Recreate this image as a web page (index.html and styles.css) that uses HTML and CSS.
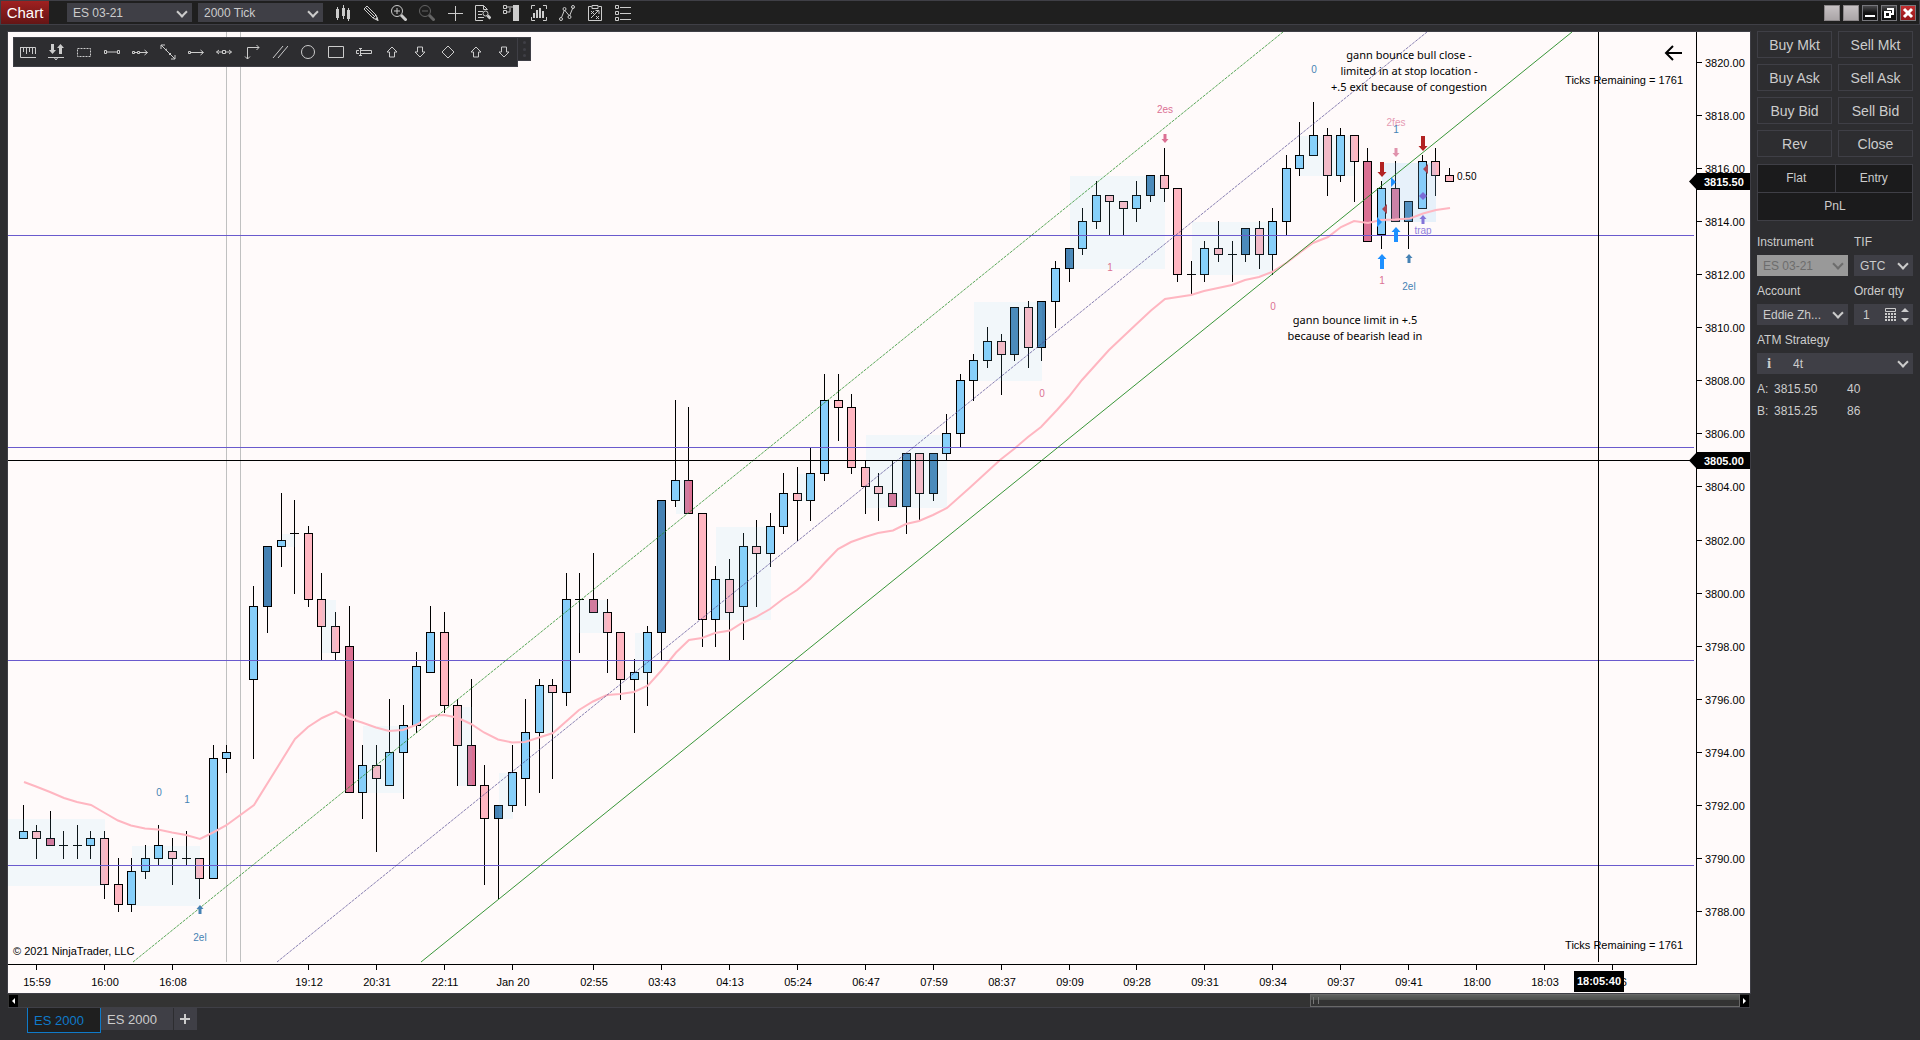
FILE: index.html
```html
<!DOCTYPE html>
<html lang="en">
<head>
    <meta charset="UTF-8">
    <meta name="viewport" content="width=device-width, initial-scale=1">
    <title>Chart - ES 03-21</title>
    <link rel="stylesheet" href="styles.css">
</head>
<body>
    <header class="titlebar">
        <h1 class="badge">Chart</h1>
        <div class="dropdown top-dropdown">
            <select aria-label="Instrument selector"><option>ES 03-21</option></select>
        </div>
        <div class="dropdown top-dropdown">
            <select aria-label="Interval selector"><option>2000 Tick</option></select>
        </div>
        <nav class="tools">
            <button aria-label="Bars"><svg viewBox="0 0 16 16"><path d="M2.5 2v13M8.500 0v14M13.500 3v13"/><path class="fill" d="M1 4h3v9H1zM7 3h3v8H7zM12 5h3v9h-3z"/></svg></button>
            <button aria-label="Drawing tools"><svg viewBox="0 0 16 16"><path d="M1 4l3-3 9 9-3 3zM2.500 2.500l9 9M10 13l5 2.500-2-5.500"/><path class="fill" d="M12 14l3.500 2-1-4z"/></svg></button>
            <button aria-label="Zoom in"><svg viewBox="0 0 16 16"><circle cx="6" cy="6" r="5.500"/><path d="M6 3v6M3 6h6"/><path class="thick" d="M10 10l5.500 5.500"/></svg></button>
            <button aria-label="Zoom out" disabled><svg viewBox="0 0 16 16"><circle cx="6" cy="6" r="5.500"/><path d="M3 6h6"/><path class="thick" d="M10 10l5.500 5.500"/></svg></button>
            <button aria-label="Crosshair"><svg viewBox="0 0 16 16"><path d="M8.500 1v15M1 8.500h15"/></svg></button>
            <button aria-label="Data box"><svg viewBox="0 0 16 16"><path d="M8 15.500H.5V.5h8l4 4M8.500.5v4h4M3 6.500h5M3 9.500h4M3 12.500h6"/><circle cx="10.500" cy="8.500" r="2.500"/><path class="thick" d="M12.500 10.500l3 3"/></svg></button>
            <button aria-label="Chart trader"><svg viewBox="0 0 16 16"><path d="M.5.500h3v3h-3zM.5 5.500h3v3h-3zM4 2h7M4 7h3V3"/><path class="fill" d="M10 0h6v16h-6z"/></svg></button>
            <button aria-label="Data series"><svg viewBox="0 0 16 16"><path d="M.5 4V.5H4M12 .5h3.500V4M.5 12v3.500H4M12 15.500h3.500V12"/><path class="bars" d="M3 8v5M6 5v8M9 3v10M12 6v7"/></svg></button>
            <button aria-label="Indicators"><svg viewBox="0 0 16 16"><path d="M2.500 12.500L5.500 5l5 6L14 2.500"/><circle cx="2" cy="14" r="1.500"/><circle cx="5.500" cy="4" r="1.500"/><circle cx="10.500" cy="12" r="1.500"/><circle cx="14" cy="2" r="1.500"/></svg></button>
            <button aria-label="Strategies"><svg viewBox="0 0 16 16"><path d="M1.500 1.500h3m7 0h3v14h-13v-14M5 .5h6v3H5zM4 6l3 3M7 6L4 9M9 11l3 3M12 11l-3 3M4 13l7-7M8.500 5.500H12V9"/></svg></button>
            <button aria-label="Properties"><svg viewBox="0 0 16 16"><path d="M.5.500h3v3h-3zM.5 6.500h3v3h-3zM.5 12.500h3v3h-3zM5 2.500h11M5 8.500h11M5 14.500h11"/></svg></button>
        </nav>
        <div class="window-buttons">
            <button class="pale" aria-label="Link instrument"></button>
            <button class="pale" aria-label="Link interval"></button>
            <button aria-label="Minimize"><svg viewBox="0 0 14 14"><path d="M2 10h10"/></svg></button>
            <button aria-label="Restore"><svg viewBox="0 0 14 14"><path d="M5 3h6v5H8M3 6h5v5H3z"/></svg></button>
            <button class="close" aria-label="Close window"><svg viewBox="0 0 14 14"><path d="M3 3l8 8M11 3l-8 8"/></svg></button>
        </div>
    </header>

    <main class="workspace">
        <section class="chart-area">
            <div class="chart">
                <svg id="plot" viewBox="8 32 1742 961" preserveAspectRatio="xMinYMin meet" role="img" aria-label="ES 03-21, 2000 Tick"></svg>
                <div class="draw-bar">
                    <div class="draw-tools">
                        <button aria-label="Ruler"><svg viewBox="0 0 16 16"><path d="M.5 3v10.500H16M.5 3.500h15V10M3.500 4v4M6.500 4v6M9.500 4v4M12.500 4v6"/></svg></button>
                        <button aria-label="Risk reward"><svg viewBox="0 0 16 16"><path class="fill" d="M3 0h3v6h2L4.500 10 1 6h2zM11 10h3V4h2L12.500 0 9 4h2z"/><path d="M0 13.500h16M6.500 14l1.500 2 1.500-2"/></svg></button>
                        <button aria-label="Region"><svg viewBox="0 0 16 16"><path stroke-dasharray="2 1" d="M1.500 4.500h13v8h-13z"/></svg></button>
                        <button aria-label="Line"><svg viewBox="0 0 16 16"><path d="M3 8h10M.5 6.500h2v3h-2zM13.500 6.500h2v3h-2z"/></svg></button>
                        <button aria-label="Ray"><svg viewBox="0 0 16 16"><path d="M.5 7.500h2v2h-2zM5.500 7.500h2v2h-2zM3 8.500h2M8 8.500h7.500M12.500 6l3 2.500-3 2.500"/></svg></button>
                        <button aria-label="Extended line"><svg viewBox="0 0 16 16"><path d="M1 1l14 14M1 5V1h4M15 11v4h-4M5 6l2-1M9 11l2-2"/></svg></button>
                        <button aria-label="Arrow line"><svg viewBox="0 0 16 16"><path d="M.5 7.500h2v2h-2zM3 8.500h12M12.500 6l3 2.500-3 2.500"/></svg></button>
                        <button aria-label="Horizontal line"><svg viewBox="0 0 16 16"><path d="M.5 8H6M10 8h5.500M3 6L.5 8 3 10M13 6l2.500 2L13 10M6.500 6.500h3v3h-3z"/></svg></button>
                        <button aria-label="Path"><svg viewBox="0 0 16 16"><path d="M3.500 15V3.500H15M12.500 1L15 3.500 12.500 6M1 12.500L3.500 15 6 12.500"/></svg></button>
                        <button aria-label="Channel"><svg viewBox="0 0 16 16"><path d="M1 14L11 2M6 14L16 2"/></svg></button>
                        <button aria-label="Ellipse"><svg viewBox="0 0 16 16"><circle cx="8" cy="8" r="6.500"/></svg></button>
                        <button aria-label="Rectangle"><svg viewBox="0 0 16 16"><path d="M.5 2.500h15v11H.5z"/></svg></button>
                        <button aria-label="Text"><svg viewBox="0 0 16 16"><path d="M5 6.500h10.500v3H5M3 6.500H.5v3H3M4.500 4.500v7M3 4.500h3M3 11.500h3"/></svg></button>
                        <button aria-label="Arrow up"><svg viewBox="0 0 16 16"><path d="M8 3l5 5h-2.500v5h-5V8H3z"/></svg></button>
                        <button aria-label="Arrow down"><svg viewBox="0 0 16 16"><path d="M8 13l5-5h-2.500V3h-5v5H3z"/></svg></button>
                        <button aria-label="Diamond"><svg viewBox="0 0 16 16"><path d="M8 2l6 6-6 6-6-6z"/></svg></button>
                        <button aria-label="Signal up"><svg viewBox="0 0 16 16"><path d="M8 3l5 5h-2.500v5h-5V8H3z"/></svg></button>
                        <button aria-label="Signal down"><svg viewBox="0 0 16 16"><path d="M8 13l5-5h-2.500V3h-5v5H3z"/></svg></button>
                    </div>
                    <div class="grip"><i></i><i></i><i></i></div>
                </div>
            </div>
            <div class="scrollbar">
                <button class="arrow-left" aria-label="Scroll left"></button>
                <div class="track"><div class="thumb"></div></div>
                <button class="arrow-right" aria-label="Scroll right"></button>
            </div>
            <div class="tabs">
                <button class="tab active">ES 2000</button>
                <button class="tab">ES 2000</button>
                <button class="tab add" aria-label="Add tab"><svg viewBox="0 0 10 10"><path d="M5 0v10M0 5h10"/></svg></button>
            </div>
        </section>

        <aside class="trader">
            <div class="orders">
                <button>Buy Mkt</button><button>Sell Mkt</button>
                <button>Buy Ask</button><button>Sell Ask</button>
                <button>Buy Bid</button><button>Sell Bid</button>
                <button>Rev</button><button>Close</button>
            </div>
            <div class="position">
                <div>Flat</div>
                <div>Entry</div>
                <div class="pnl">PnL</div>
            </div>
            <form class="settings">
                <div class="field">
                    <label for="instrument">Instrument</label>
                    <div class="dropdown off"><select id="instrument" disabled><option>ES 03-21</option></select></div>
                </div>
                <div class="field">
                    <label for="tif">TIF</label>
                    <div class="dropdown"><select id="tif"><option>GTC</option></select></div>
                </div>
                <div class="field">
                    <label for="account">Account</label>
                    <div class="dropdown"><select id="account"><option>Eddie Zh...</option></select></div>
                </div>
                <div class="field">
                    <label for="qty">Order qty</label>
                    <div class="qty">
                        <input id="qty" type="text" value="1">
                        <svg class="calc" viewBox="0 0 11 13"><path d="M.5.500h10v3H.5z"/><path stroke-dasharray="2 1" d="M0 6h11M0 9h11M0 12h11" stroke-width="2"/></svg>
                        <svg class="spin" viewBox="0 0 8 14"><path d="M0 4l4-4 4 4zM0 10l4 4 4-4z"/></svg>
                    </div>
                </div>
                <div class="field wide">
                    <label for="atm">ATM Strategy</label>
                    <div class="dropdown atm"><b>i</b><select id="atm"><option>4t</option></select></div>
                </div>
            </form>
            <div class="quotes">
                <span>A:</span><span>3815.50</span><span>40</span>
                <span>B:</span><span>3815.25</span><span>86</span>
            </div>
        </aside>
    </main>

    <script src="chart.js"></script>
</body>
</html>
```

FILE: styles.css
```css
* {
    box-sizing: border-box;
}
body {
    margin: 0;
    height: 100vh;
    display: flex;
    flex-direction: column;
    background-color: #2d2d30;
    color: #ccc;
    font-family: "Liberation Sans", Arial, sans-serif;
    font-size: 12px;
    overflow: hidden;
}
button, select, input {
    font: inherit;
    color: inherit;
    border: none;
    border-radius: 0;
    padding: 0;
    background: none;
}
svg {
    display: block;
    fill: none;
}

/* Title bar */
.titlebar {
    height: 25px;
    flex: none;
    display: flex;
    align-items: center;
    background-color: #1f1f1f;
    border: 1px solid #3f3f46;
}
.badge {
    margin: 0 18px 0 0;
    width: 48px;
    height: 23px;
    line-height: 23px;
    text-align: center;
    font-size: 15px;
    font-weight: normal;
    color: white;
    background: linear-gradient(#a02020, #651515);
}
.dropdown {
    position: relative;
    height: 21px;
    display: flex;
    align-items: center;
    background-color: #3f3f46;
}
.dropdown::after {
    content: "";
    position: absolute;
    right: 6px;
    top: 5px;
    width: 6px;
    height: 6px;
    border: solid #ccc;
    border-width: 0 2px 2px 0;
    transform: rotate(45deg);
    pointer-events: none;
}
.dropdown select {
    appearance: none;
    width: 100%;
    height: 100%;
    padding-left: 6px;
}
.top-dropdown {
    width: 125px;
    height: 19px;
    margin-right: 6px;
}
.tools {
    display: flex;
    gap: 12px;
    margin-left: 6px;
}
.tools svg, .draw-tools svg {
    width: 16px;
    height: 16px;
    stroke: #ccc;
}
.tools button:disabled {
    opacity: .4;
}
.fill {
    fill: #ccc;
    stroke: none;
}
.thick {
    stroke-width: 3;
}
.bars {
    stroke-width: 2;
}
.window-buttons {
    margin-left: auto;
    margin-right: 3px;
    display: flex;
    gap: 3px;
}
.window-buttons button {
    width: 16px;
    height: 16px;
    border: 1px solid #77777c;
    background: linear-gradient(#4a4a4d, #111 50%);
}
.window-buttons .pale {
    background: linear-gradient(#c6c1c3, #aaa5a7);
    border-color: #8b8789;
}
.window-buttons .close {
    background: linear-gradient(#c22e30, #951618);
}
.window-buttons svg {
    width: 14px;
    height: 14px;
    stroke: white;
    stroke-width: 2;
}
.close svg {
    stroke-width: 3;
}

/* Chart */
.workspace {
    flex: 1;
    min-height: 0;
    display: flex;
    gap: 7px;
    padding: 7px 7px 7px 8px;
}
.chart-area {
    flex: 1;
    min-width: 0;
    display: flex;
    flex-direction: column;
}
.chart {
    position: relative;
    flex: 1;
    min-height: 0;
    background-color: #fffafa;
    outline: 1px solid #3f3f46;
}
#plot {
    width: 100%;
    height: 100%;
    font-size: 11px;
}
#plot .mark {
    font-size: 10px;
}
#plot .note {
    font-family: "Noto Sans", "Open Sans", sans-serif;
    font-size: 11px;
}
.draw-bar {
    position: absolute;
    left: 5px;
    top: 5px;
    display: flex;
    align-items: flex-start;
}
.draw-tools {
    display: flex;
    gap: 12px;
    padding: 6px 5px 6px 6px;
    background-color: #2d2d30;
    border: 1px solid #3f3f46;
}
.grip {
    width: 13px;
    height: 24px;
    display: flex;
    flex-direction: column;
    align-items: center;
    justify-content: space-evenly;
    background-color: #2d2d30;
    border: 1px solid #3f3f46;
    border-left: none;
}
.grip i {
    width: 3px;
    height: 3px;
    border-radius: 50%;
    background-color: #3f3f46;
}

/* Scrollbar and tabs */
.scrollbar {
    height: 15px;
    display: flex;
    align-items: center;
    background-color: #333;
    border-top: 1px solid #1f1f1f;
    border-bottom: 1px solid #3f3f46;
    padding: 0 1px;
}
.scrollbar button {
    width: 9px;
    height: 12px;
    background-color: black;
    display: flex;
    align-items: center;
    justify-content: center;
}
.scrollbar button::after {
    content: "";
    border: 3px solid transparent;
}
.arrow-left::after {
    border-right-color: white !important;
    border-left-width: 0 !important;
}
.arrow-right::after {
    border-left-color: white !important;
    border-right-width: 0 !important;
}
.track {
    flex: 1;
    height: 13px;
}
.thumb {
    width: 25%;
    height: 13px;
    margin-left: auto;
    border: 1px solid #686868;
    background: linear-gradient(#5e605e, #484a48 50%, #333 50%);
}
.thumb::before {
    content: "";
    display: block;
    width: 4px;
    height: 7px;
    margin: 2px;
    border: solid #777;
    border-width: 0 1px;
}
.tabs {
    height: 25px;
    display: flex;
    padding-left: 19px;
    font-size: 13px;
}
.tab {
    height: 22px;
    width: 72px;
    padding-left: 6px;
    text-align: left;
    background-color: #3f3f46;
}
.tab.active {
    height: 25px;
    width: 74px;
    color: #0f7ac9;
    background-color: #1f1f1f;
    border: 1px solid #0f7ac9;
    border-top: none;
}
.tab.add {
    width: 24px;
    display: flex;
    align-items: center;
    border-left: 1px solid #2d2d30;
}
.tab svg {
    width: 10px;
    height: 10px;
    stroke: #ccc;
    stroke-width: 2;
}

/* Order panel */
.trader {
    width: 156px;
    flex: none;
}
.orders {
    display: grid;
    grid-template-columns: 1fr 1fr;
    gap: 6px;
    margin-top: -1px;
}
.orders button {
    height: 27px;
    font-size: 14px;
    border: 1px solid #3f3f46;
}
.position {
    display: grid;
    grid-template-columns: 1fr 1fr;
    gap: 1px;
    margin-top: 7px;
    border: 1px solid #3f3f46;
    background-color: #3f3f46;
}
.position div {
    height: 27px;
    line-height: 27px;
    text-align: center;
    background-color: #1b1b1c;
}
.position .pnl {
    grid-column: span 2;
}
.settings {
    display: grid;
    grid-template-columns: 91px 59px;
    column-gap: 6px;
    row-gap: 7px;
    margin-top: 13px;
}
.field label {
    display: block;
    line-height: 16px;
    margin-bottom: 5px;
}
.wide {
    grid-column: span 2;
}
.off {
    background-color: #999;
    color: #6d6d6d;
}
.off select:disabled {
    opacity: 1;
}
.off::after {
    border-color: #6d6d6d;
}
.atm b {
    width: 24px;
    flex: none;
    text-align: center;
    font-family: "Liberation Serif", serif;
    font-size: 15px;
}
.atm select {
    padding-left: 12px;
}
.qty {
    display: flex;
    align-items: center;
    gap: 5px;
    height: 21px;
    padding: 0 4px 0 9px;
    background-color: #3f3f46;
}
.qty input {
    flex: 1;
    min-width: 0;
}
.calc {
    width: 11px;
    height: 13px;
    stroke: #ccc;
}
.spin {
    width: 8px;
    height: 14px;
    fill: #ccc;
}
.quotes {
    display: grid;
    grid-template-columns: 17px 73px auto;
    line-height: 22px;
    margin-top: 4px;
}
```

FILE: chart.js
```js
const plot = document.getElementById("plot");

// heights are counted in ticks of 0.25 above 3788.00
const yOf = tick => 911.4 - 6.632 * tick;
const xOf = index => Math.floor(23 + 13.585 * index);

const colors = { b: "#87cefa", B: "#4682b4", p: "#ffb6c1", P: "#db7093" };

// [bar, high, body top, body bottom, low, color]
const bars = [
    [0,16,12,11,11,"b"], [1,13,12,11,8,"p"], [2,15,11,10,10,"P"], [3,12,10,10,8,"d"], [4,13,10,10,8,"d"],
    [5,12,11,10,8,"b"], [6,12,11,4,2,"p"], [7,8,4,1,0,"p"], [8,8,6,1,0,"b"], [9,10,8,6,5,"b"],
    [10,13,10,8,7,"b"], [11,11,9,8,4,"p"], [12,12,8,8,7,"d"], [13,8,8,5,2,"p"], [14,25,23,5,5,"b"],
    [15,25,24,23,21,"b"], [17,49,46,35,23,"b"], [18,55,55,46,42,"B"], [19,63,56,55,52,"b"], [20,62,57,57,48,"d"],
    [21,58,57,47,46,"p"], [22,51,47,43,38,"p"], [23,45,43,39,38,"p"], [24,46,40,18,18,"P"], [25,25,22,18,14,"b"],
    [26,25,22,20,9,"p"], [27,32,24,19,19,"b"], [28,31,28,24,17,"b"], [29,39,37,28,27,"b"], [30,46,42,36,36,"b"],
    [31,45,42,31,30,"p"], [32,32,31,25,19,"p"], [33,35,25,19,19,"P"], [34,22,19,14,4,"p"], [35,16,16,14,2,"B"],
    [36,25,21,16,15,"b"], [37,32,27,20,16,"b"], [38,35,34,27,18,"b"], [39,35,34,33,20,"p"], [40,51,47,33,31,"b"],
    [41,51,47,47,39,"d"], [42,54,47,45,45,"P"], [43,47,45,42,36,"p"], [44,42,42,35,32,"p"], [45,38,36,35,27,"b"],
    [46,43,42,36,31,"b"], [47,62,62,42,38,"B"], [48,77,65,62,61,"b"], [49,76,65,60,60,"P"], [50,60,60,44,40,"p"],
    [51,52,50,44,40,"b"], [52,53,50,45,38,"p"], [53,57,55,46,41,"b"], [54,59,55,54,46,"p"], [55,60,58,54,52,"b"],
    [56,66,63,58,57,"b"], [57,67,63,62,56,"p"], [58,70,66,62,59,"b"], [59,81,77,66,65,"b"], [60,81,77,76,71,"p"],
    [61,78,76,67,66,"p"], [62,68,67,64,60,"p"], [63,66,64,63,59,"p"], [64,68,63,61,61,"P"], [65,69,69,61,57,"B"],
    [66,69,69,63,59,"p"], [67,69,69,63,62,"B"], [68,75,72,69,68,"b"], [69,81,80,72,70,"b"], [70,84,83,80,77,"b"],
    [71,88,86,83,82,"b"], [72,87,86,84,78,"p"], [73,91,91,84,83,"B"], [74,92,91,85,82,"p"], [75,92,92,85,83,"B"],
    [76,98,97,92,88,"b"], [77,100,100,97,95,"B"], [78,106,104,100,99,"b"], [79,110,108,104,103,"b"], [80,108,108,107,102,"p"],
    [81,107,107,106,102,"p"], [82,110,108,106,104,"b"], [83,111,111,108,107,"B"], [84,115,111,109,107,"p"], [85,109,109,96,95,"p"],
    [86,98,96,96,93,"d"], [87,101,100,96,95,"b"], [88,104,100,99,98,"p"], [89,101,99,99,95,"d"], [90,103,103,99,98,"B"],
    [91,104,103,99,97,"p"], [92,106,104,99,96,"b"], [93,114,112,104,102,"b"], [94,119,114,112,111,"b"], [95,122,117,114,114,"b"],
    [96,118,117,111,108,"p"], [97,118,117,111,110,"b"], [98,117,117,113,107,"p"], [99,115,113,101,101,"P"], [100,110,109,102,100,"b"],
    [101,113,109,104,104,"P"], [102,107,107,104,100,"B"], [103,114,113,106,106,"b"], [104,115,113,111,108,"p"], [105,112,111,110,110,"p"]
];

// congestion zones: x1, y1, x2, y2
const zones = [
    [8,819,105,886], [132,846,200,906], [282,534,295,547], [322,600,336,653], [363,726,403,793], [458,707,472,786],
    [499,773,513,819], [539,686,553,733], [579,600,607,633], [635,633,648,680], [676,480,689,514], [716,527,771,620],
    [798,474,811,501], [866,435,947,508], [974,302,1042,381], [1070,176,1165,269], [1192,222,1273,275], [1300,136,1354,176]
];

const average = "24,782 36,786.5 50,792 64,798 77,802 91,805 104,812.5 118,820.5 131,825.5 145,828.5 158,829.5 172,832.5 186,835 200,839 213,832.5 226,825.5 254,805 295,739 308,727 322,718 336,711.7 349,718.5 362,722.5 376,727.5 389,731 403,730 417,724.5 431,716 444,715 457,717.5 471,724 484,732.5 498,739.5 512,742.5 525,742 539,737.5 553,733 579,710 593,701.5 607,695 620,694 634,692 648,685.5 661,671 676,652.5 689,640 702,638 715,633 730,630.5 742,623 756,617 770,609 783,599 797,590 810,579 825,562.5 838,549 851,542 865,537 878,533 893,530.5 906,524 919,521 933,515 947,508 970,487.5 1000,460 1014,449 1028,437 1041,427 1057,410 1069,396.5 1082,380 1109,350 1136,324.5 1151,310.5 1165,299 1191,295 1204,291 1232,285 1245,280 1259,277 1272,272 1287,262.5 1300,252.5 1313,243 1328,237 1341,227 1354,221 1368,223 1381,220 1395,219.5 1410,218.5 1423,213.5 1436,210 1450,208";

let out = "";

function line(x1, y1, x2, y2, color, extra = "") {
    out += `<line x1="${x1}" y1="${y1}" x2="${x2}" y2="${y2}" stroke="${color}" ${extra}/>`;
}
function rect(x, y, w, h, color, extra = "") {
    out += `<rect x="${x}" y="${y}" width="${w}" height="${h}" fill="${color}" ${extra}/>`;
}
function text(x, y, value, color = "black", anchor = "middle", cls = "") {
    out += `<text x="${x}" y="${y}" fill="${color}" text-anchor="${anchor}" class="${cls}">${value}</text>`;
}
// arrow of height h, with its top at y
function arrow(x, y, h, dir, color) {
    const w = h > 10 ? 4.5 : 3.5;
    const s = h > 10 ? 2 : 1.5;
    const head = h > 10 ? 5 : 4;
    const tip = dir === "up" ? y : y + h;
    const k = dir === "up" ? 1 : -1;
    out += `<path fill="${color}" d="M${x} ${tip}l${w} ${k * head}h${s - w}v${k * (h - head)}h${-2 * s}v${-k * (h - head)}h${s - w}z"/>`;
}

// session breaks
line(226.5, 32, 226.5, 962, "#c0c0c0");
line(240.5, 32, 240.5, 962, "#c0c0c0");

for (const [i, high, top, bottom, low, type] of bars) {
    const x = xOf(i) + 0.5;
    const y1 = Math.floor(yOf(top)) + 0.5;
    const y2 = Math.floor(yOf(bottom)) + 0.5;
    line(x, Math.floor(yOf(high)), x, Math.floor(yOf(low)) + 1, "black");
    if (type === "d") {
        line(x - 4.5, y1, x + 4.5, y1, "black");
    } else {
        rect(x - 4, y1, 8, y2 - y1, colors[type], 'stroke="black"');
    }
}

for (const [x1, y1, x2, y2] of zones) {
    rect(x1, y1, x2 - x1, y2 - y1, "#80dfff", 'fill-opacity="0.1"');
}
rect(1382, 163, 54, 59, "#87cefa", 'fill-opacity="0.2"');

out += `<polyline points="${average}" fill="none" stroke="#ffb6c1" stroke-width="2"/>`;

for (const y of [235, 447, 660, 865]) {
    line(8, y + 0.5, 1694, y + 0.5, "#6a5acd");
}
line(133, 962, 1283, 32, "#228b22", 'stroke-dasharray="3 1" stroke-opacity="0.75"');
line(277, 962, 1427, 32, "#483d8b", 'stroke-dasharray="3 1" stroke-opacity="0.65"');
line(421, 962, 1572, 32, "#228b22", 'stroke-opacity="0.9"');

// trade markers
arrow(1382, 162, 15, "down", "#b22222");
arrow(1423, 136, 15, "down", "#b22222");
arrow(1382, 254, 15, "up", "#1e90ff");
arrow(1396, 227, 15, "up", "#1e90ff");
arrow(1396, 148, 9, "down", "#e092ac");
arrow(1165, 134, 9, "down", "#db7093");
arrow(1409, 254, 9, "up", "#4682b4");
arrow(1423, 215, 9, "up", "#8474d8");
arrow(200, 905, 9, "up", "#4682b4");
out += `<path fill="#7b6bd6" d="M1423 192l4 4-4 4-4-4z"/>
    <path fill="#1e90ff" d="M1391 177l5 5-5 5zM1377 217l5 5-5 5z"/>
    <path fill="#a84450" d="M1387 204l-5 5 5 5zM1428 164l-5 5 5 5z"/>`;

text(1314, 73, "0", "#4682b4", "middle", "mark");
text(1396, 126, "2fes", "#e59bb3", "middle", "mark");
text(1396, 133, "1", "#4682b4", "middle", "mark");
text(1382, 284, "1", "#db7093", "middle", "mark");
text(1409, 290, "2el", "#4682b4", "middle", "mark");
text(1423, 234, "trap", "#9181dc", "middle", "mark");
text(1273, 310, "0", "#db7093", "middle", "mark");
text(1165, 113, "2es", "#db7093", "middle", "mark");
text(1110, 271, "1", "#db7093", "middle", "mark");
text(1042, 397, "0", "#db7093", "middle", "mark");
text(159, 796, "0", "#4682b4", "middle", "mark");
text(187, 803, "1", "#4682b4", "middle", "mark");
text(200, 941, "2el", "#4682b4", "middle", "mark");
text(1457, 180, "0.50", "black", "start", "mark");

text(1409, 59, "gann bounce bull close -", "black", "middle", "note");
text(1409, 75, "limited in at stop location -", "black", "middle", "note");
text(1409, 91, "+.5 exit because of congestion", "black", "middle", "note");
text(1355, 324, "gann bounce limit in +.5", "black", "middle", "note");
text(1355, 340, "because of bearish lead in", "black", "middle", "note");

text(1683, 84, "Ticks Remaining = 1761", "black", "end");
text(1683, 949, "Ticks Remaining = 1761", "black", "end");
text(13, 955, "© 2021 NinjaTrader, LLC", "black", "start");
out += `<path d="M1682 53h-16M1673 46l-7 7 7 7" stroke="black" stroke-width="2"/>`;

// axes
line(8, 964.5, 1697, 964.5, "black");
line(1696.5, 32, 1696.5, 965, "black");
for (let price = 3788; price <= 3820; price += 2) {
    const y = Math.floor(yOf((price - 3788) * 4));
    line(1697, y + 0.5, 1702, y + 0.5, "black");
    text(1705, y + 5, price.toFixed(2), "black", "start");
}
const times = {
    1: "15:59", 6: "16:00", 11: "16:08", 21: "19:12", 26: "20:31", 31: "22:11", 36: "Jan 20", 42: "02:55",
    47: "03:43", 52: "04:13", 57: "05:24", 62: "06:47", 67: "07:59", 72: "08:37", 77: "09:09", 82: "09:28",
    87: "09:31", 92: "09:34", 97: "09:37", 102: "09:41", 107: "18:00", 112: "18:03", 117: "18:06"
};
for (const i in times) {
    line(xOf(i) + 0.5, 965, xOf(i) + 0.5, 970, "black");
    text(xOf(i) + 1, 986, times[i]);
}

// crosshair and price tags
line(8, 460.5, 1697, 460.5, "black");
line(1598.5, 32, 1598.5, 962, "black");
for (const [y, price] of [[181, "3815.50"], [460, "3805.00"]]) {
    out += `<path fill="black" d="M1689 ${y + 0.5}l8-8.500h53v17h-53z"/>`;
    out += `<text x="1704" y="${y + 5}" fill="white" font-weight="bold">${price}</text>`;
}
rect(1574, 971, 50, 21, "black");
out += `<text x="1599" y="985" fill="white" font-weight="bold" text-anchor="middle">18:05:40</text>`;

plot.innerHTML = out;
```
